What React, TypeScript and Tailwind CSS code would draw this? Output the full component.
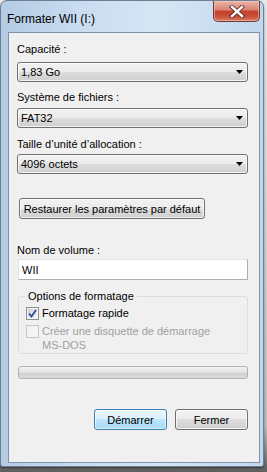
import React from "react";

function Combo({ value }: { value: string }) {
  return (
    <div className="w-[231px] h-[20px] rounded-[3px] border border-[#707070] bg-[linear-gradient(#f2f2f2_0%,#ebebeb_50%,#dddddd_50%,#cfcfcf_100%)] shadow-[inset_0_0_0_1px_rgba(255,255,255,0.7)] flex items-center justify-between pl-[3px] pr-[4px]">
      <span className="text-[11px] leading-[16px] text-black">{value}</span>
      <svg width="7" height="4" viewBox="0 0 7 4">
        <path d="M0 0 H7 L3.5 4 Z" fill="#000" />
      </svg>
    </div>
  );
}

function Label({ children, className = "" }: { children: React.ReactNode; className?: string }) {
  return <div className={"text-[11px] leading-[16px] text-black " + className}>{children}</div>;
}

export default function App() {
  return (
    <div
      className="w-[267px] h-[472px] bg-[linear-gradient(#e8e8e8_0%,#bcbcbc_90%,#5e5e5e_100%)] overflow-hidden"
      style={{ fontFamily: '"Liberation Sans", Arial, sans-serif' }}
    >
      <div className="w-[264px] h-[467px] rounded-t-[7px] rounded-b-[3px] border border-[#6f7f93] bg-[linear-gradient(90deg,#b3cbe4_0%,#c9dcf0_30%,#d6e5f4_60%,#c2d7ee_100%)] flex flex-col shadow-[0_1px_2px_rgba(0,0,0,0.5)]">
        {/* title bar */}
        <div className="h-[31px] flex items-start justify-between">
          <div className="pl-[6px] pt-[10px] text-[12px] leading-[16px] text-black">Formater WII (I:)</div>
          <div className="mr-[3px] w-[47px] h-[21px] rounded-b-[5px] border border-t-0 border-[#6d3b33] bg-[linear-gradient(#e8b3a6_0%,#d88572_45%,#c5422b_50%,#c64c36_75%,#d97b63_100%)] flex items-center justify-center shadow-[inset_0_0_0_1px_rgba(255,210,200,0.5)]">
            <svg width="16" height="13" viewBox="0 0 16 13">
              <path d="M3 2 L13 11 M13 2 L3 11" stroke="#5a2a22" strokeWidth="4.2" strokeLinecap="square" />
              <path d="M3 2 L13 11 M13 2 L3 11" stroke="#ffffff" strokeWidth="2.4" strokeLinecap="square" />
            </svg>
          </div>
        </div>
        {/* client */}
        <div className="ml-[7px] mr-[3px] mb-[3px] flex-1 border border-[#7f93ad] bg-[#f0f0f0] pl-[8px] flex flex-col">
          <Label className="mt-[8px]">Capacité :</Label>
          <div className="mt-[5px]"><Combo value="1,83 Go" /></div>
          <Label className="mt-[7px]">Système de fichiers :</Label>
          <div className="mt-[3px]"><Combo value="FAT32" /></div>
          <Label className="mt-[8px]">Taille d’unité d’allocation :</Label>
          <div className="mt-[2px]"><Combo value="4096 octets" /></div>
          <div className="mt-[24px] ml-[2px] w-[186px] h-[21px] rounded-[3px] border border-[#707070] bg-[linear-gradient(#f2f2f2_0%,#ebebeb_50%,#dddddd_50%,#cfcfcf_100%)] shadow-[inset_0_0_0_1px_rgba(255,255,255,0.7)] flex items-center justify-center whitespace-nowrap text-[11px] leading-[16px] text-black">
            Restaurer les paramètres par défaut
          </div>
          <Label className="mt-[23px]">Nom de volume :</Label>
          <div className="mt-[1px] ml-[1px] w-[230px] h-[21px] border border-[#abadb3] border-t-[#e3e3e3] border-l-[#e3e3e3] bg-white flex items-center pl-[3px] text-[11px] leading-[16px] text-black">
            WII
          </div>
          <fieldset className="mt-[8px] ml-[1px] w-[230px] h-[66px] rounded-[3px] border border-[#d5dfe5] pl-[7px] pr-0 pb-0">
            <legend className="ml-[-1px] px-[3px] text-[11px] leading-[16px] text-black">Options de formatage</legend>
            <div className="flex items-center gap-[3px] mt-[2px]">
              <div className="w-[13px] h-[13px] border border-[#8e8f8f] bg-[#f4f4f4] p-[1px]">
                <div className="w-full h-full bg-[linear-gradient(135deg,#cbcfd5,#f6f6f6)] flex items-center justify-center">
                  <svg width="9" height="9" viewBox="0 0 9 9">
                    <path d="M1 4.5 L3.5 7.5 L8 1" stroke="#2a4a9a" strokeWidth="1.8" fill="none" />
                  </svg>
                </div>
              </div>
              <span className="text-[11px] leading-[15px] text-black">Formatage rapide</span>
            </div>
            <div className="flex items-start gap-[3px] mt-[3px]">
              <div className="mt-[1px] w-[13px] h-[13px] shrink-0 border border-[#c8c8c8] bg-[#f4f4f4]" />
              <div className="text-[11px] leading-[14px] text-[#a0a0a0]">
                <div>Créer une disquette de démarrage</div>
                <div>MS-DOS</div>
              </div>
            </div>
          </fieldset>
          <div className="mt-[12px] ml-[1px] w-[230px] h-[13px] rounded-[3px] border border-[#b2b2b2] bg-[linear-gradient(#f3f3f3_0%,#e2e2e2_50%,#d0d0d0_55%,#dcdcdc_100%)]" />
          <div className="mt-[30px] flex justify-end gap-[8px] w-[231px]">
            <div className="w-[73px] h-[21px] rounded-[3px] border border-[#3c7fb1] bg-[linear-gradient(#eaf6fd_0%,#d9f0fc_50%,#bee6fd_50%,#a7d9f5_100%)] shadow-[inset_0_0_0_1px_rgba(255,255,255,0.6)] flex items-center justify-center text-[11px] leading-[16px] text-black">
              Démarrer
            </div>
            <div className="w-[73px] h-[21px] rounded-[3px] border border-[#707070] bg-[linear-gradient(#f2f2f2_0%,#ebebeb_50%,#dddddd_50%,#cfcfcf_100%)] shadow-[inset_0_0_0_1px_rgba(255,255,255,0.7)] flex items-center justify-center text-[11px] leading-[16px] text-black">
              Fermer
            </div>
          </div>
        </div>
      </div>
    </div>
  );
}
